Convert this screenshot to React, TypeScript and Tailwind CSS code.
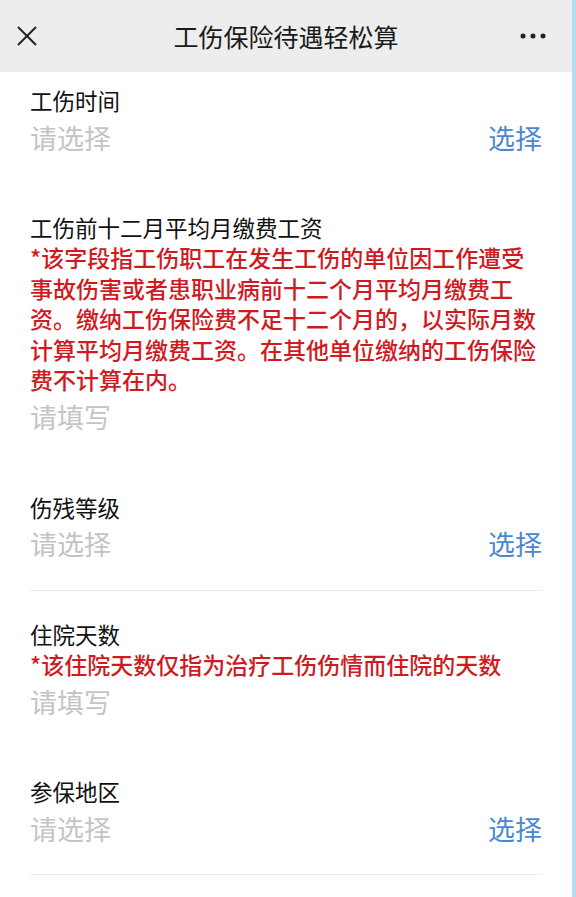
import React from "react";

type Item = {
  label: string;
  note?: string;
  kind: "select" | "input";
  divider?: boolean;
};

const items: Item[] = [
  { label: "工伤时间", kind: "select" },
  {
    label: "工伤前十二月平均月缴费工资",
    note: "*该字段指工伤职工在发生工伤的单位因工作遭受事故伤害或者患职业病前十二个月平均月缴费工资。缴纳工伤保险费不足十二个月的，以实际月数计算平均月缴费工资。在其他单位缴纳的工伤保险费不计算在内。",
    kind: "input",
  },
  { label: "伤残等级", kind: "select", divider: true },
  {
    label: "住院天数",
    note: "*该住院天数仅指为治疗工伤伤情而住院的天数",
    kind: "input",
  },
  { label: "参保地区", kind: "select", divider: true },
];

export default function App() {
  return (
    <div
      className="flex w-[576px] min-h-[897px] bg-white"
      style={{ fontFamily: '"Noto Sans CJK SC", "Noto Sans", sans-serif' }}
    >
      <div className="flex flex-1 flex-col">
        <header className="grid h-[72px] grid-cols-[1fr_auto_1fr] items-center bg-[#ededed]">
          <div className="flex items-center pl-[17px]">
            <svg width="20" height="20" viewBox="0 0 20 20">
              <path d="M1 1 L19 19 M19 1 L1 19" stroke="#222" strokeWidth="2" fill="none" />
            </svg>
          </div>
          <div className="text-[25px] leading-none text-[#1a1a1a]">工伤保险待遇轻松算</div>
          <div className="flex items-center justify-end pr-[26px]">
            <svg width="26" height="6" viewBox="0 0 26 6">
              <circle cx="3" cy="3" r="2.5" fill="#222" />
              <circle cx="13" cy="3" r="2.5" fill="#222" />
              <circle cx="23" cy="3" r="2.5" fill="#222" />
            </svg>
          </div>
        </header>
        <main className="flex flex-col px-[30px]">
          {items.map((it, i) => (
            <section
              key={it.label}
              className={`flex flex-col pb-[22px] border-b ${
                i === 0 ? "pt-[13px]" : "pt-[28px]"
              } ${it.divider ? "border-[#ececec]" : "border-transparent"}`}
            >
              <div className="text-[22.5px] leading-[30px] text-[#111111]">{it.label}</div>
              {it.note && (
                <div className="text-[23px] font-medium leading-[30.5px] text-[#d11a1f]">
                  {it.note}
                </div>
              )}
              <div className="flex h-[46px] items-center justify-between">
                <span className="text-[27px] text-[#c4c4c4]">
                  {it.kind === "select" ? "请选择" : "请填写"}
                </span>
                {it.kind === "select" && (
                  <span className="text-[27px] text-[#4a88d2]">选择</span>
                )}
              </div>
            </section>
          ))}
        </main>
      </div>
      <div className="w-[4px] bg-[#b6dcf4]" />
    </div>
  );
}
